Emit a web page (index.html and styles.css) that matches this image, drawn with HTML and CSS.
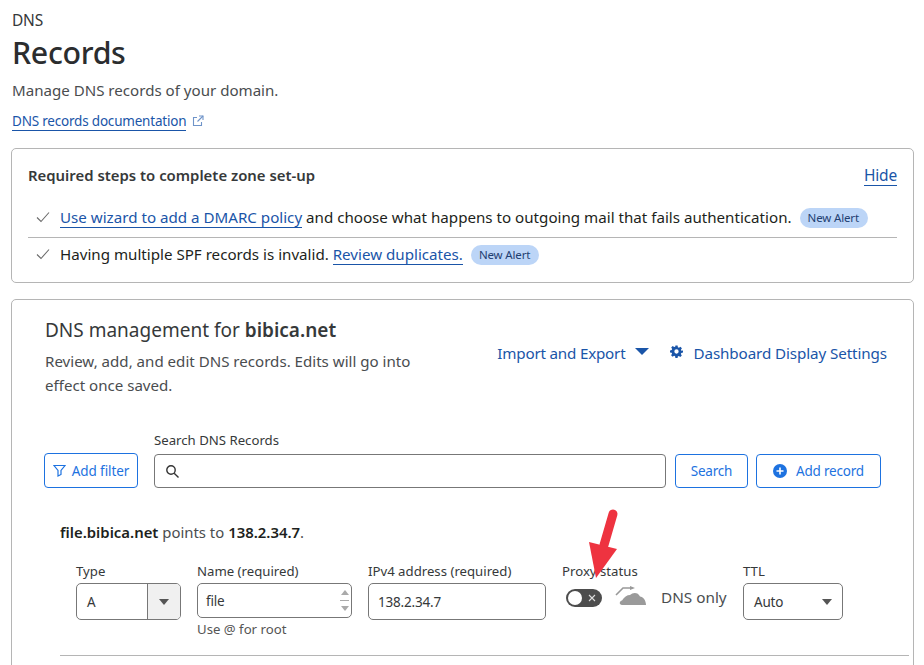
FILE: index.html
```html
<!DOCTYPE html>
<html lang="en">
<head>
    <meta charset="UTF-8">
    <meta name="viewport" content="width=device-width, initial-scale=1.0">
    <title>DNS Records</title>
    <link rel="stylesheet" href="styles.css">
</head>
<body>
<div class="page">
    <header class="page-head">
        <div class="crumb">DNS</div>
        <h1>Records</h1>
        <p class="lead">Manage DNS records of your domain.</p>
        <a class="doc-link"><span class="link">DNS records documentation</span>
            <svg class="ext-icon" width="12" height="12" viewBox="0 0 12 12" fill="none" stroke="#6f94c9" stroke-width="1.1"><path d="M5 2.500H1.500v8h8V7"/><path d="M7 1h4v4"/><path d="M11 1 5.500 6.500"/></svg>
        </a>
    </header>

    <section class="card steps">
        <div class="steps-head">
            <h2>Required steps to complete zone set-up</h2>
            <a class="link">Hide</a>
        </div>
        <ul class="steps-list">
            <li>
                <svg class="check" width="14" height="12" viewBox="0 0 14 12" fill="none" stroke="#6b6b6b" stroke-width="1.1"><path d="M1 6.500 5 10.500 13 1.500"/></svg>
                <span><a class="link">Use wizard to add a DMARC policy</a> and choose what happens to outgoing mail that fails authentication.</span>
                <span class="badge">New Alert</span>
            </li>
            <li>
                <svg class="check" width="14" height="12" viewBox="0 0 14 12" fill="none" stroke="#6b6b6b" stroke-width="1.1"><path d="M1 6.500 5 10.500 13 1.500"/></svg>
                <span>Having multiple SPF records is invalid. <a class="link">Review duplicates.</a></span>
                <span class="badge">New Alert</span>
            </li>
        </ul>
    </section>

    <section class="card dns">
        <div class="dns-top">
            <div class="dns-intro">
                <h2>DNS management for <b>bibica.net</b></h2>
                <p>Review, add, and edit DNS records. Edits will go into effect once saved.</p>
            </div>
            <div class="dns-actions">
                <a class="action">Import and Export<span class="caret"></span></a>
                <a class="action action-settings">
                    <svg class="gear" width="13" height="13" viewBox="0 0 24 24" fill="#1a55a8"><path fill-rule="evenodd" d="M10 1h4l.6 3.200 1.900.8 2.700-1.800 2.800 2.800-1.800 2.700.8 1.900L24 10v4l-3.200.6-.8 1.900 1.800 2.700-2.800 2.800-2.700-1.800-1.900.8L14 24h-4l-.6-3.200-1.900-.8-2.700 1.800-2.800-2.800 1.800-2.700-.8-1.900L0 14v-4l3.200-.6.8-1.900-1.800-2.700L5 2l2.700 1.800 1.900-.8zM12 8a4 4 0 1 0 0 8 4 4 0 0 0 0-8z"/></svg>
                    Dashboard Display Settings
                </a>
            </div>
        </div>

        <div class="search-row">
            <button class="btn btn-filter">
                <svg width="13" height="13" viewBox="0 0 13 13" fill="none" stroke="#1d72e0" stroke-width="1.2"><path d="M1 1.500h11L8 6.500V10.500L5 12V6.500z"/></svg>
                Add filter
            </button>
            <div class="search-field">
                <label>Search DNS Records</label>
                <div class="search-input">
                    <svg width="15" height="15" viewBox="0 0 15 15" fill="none" stroke="#333" stroke-width="1.4"><circle cx="6" cy="6" r="4.200"/><path d="m9.200 9.200 4.300 4.300"/></svg>
                </div>
            </div>
            <button class="btn btn-search">Search</button>
            <button class="btn btn-add">
                <svg width="14" height="14" viewBox="0 0 14 14"><circle cx="7" cy="7" r="7" fill="#1d72e0"/><path d="M7 3.500v7M3.500 7h7" stroke="#fff" stroke-width="1.6"/></svg>
                Add record
            </button>
        </div>

        <div class="record">
            <p class="record-note"><b>file.bibica.net</b> points to <b>138.2.34.7</b>.</p>
            <div class="record-form">
                <div class="field field-type">
                    <label>Type</label>
                    <div class="box type-box">
                        <span>A</span>
                        <span class="type-arrow"><i class="tri"></i></span>
                    </div>
                </div>
                <div class="field field-name">
                    <label>Name (required)</label>
                    <div class="box name-box">
                        <span>file</span>
                        <span class="stepper"><i class="up"></i><i class="bar"></i><i class="tri tri-small"></i></span>
                    </div>
                    <small>Use @ for root</small>
                </div>
                <div class="field field-ip">
                    <label>IPv4 address (required)</label>
                    <div class="box">138.2.34.7</div>
                </div>
                <div class="field field-proxy">
                    <label>Proxy status</label>
                    <div class="proxy-row">
                        <span class="toggle"><i class="knob"></i><svg width="8" height="8" viewBox="0 0 8 8" stroke="#ddd" stroke-width="1.1"><path d="m1 1 6 6M7 1 1 7"/></svg></span>
                        <svg class="cloud" width="32" height="20" viewBox="0 0 32 20"><path d="M1 9 8 2h7" fill="none" stroke="#999" stroke-width="1.6"/><path d="M15 0 20 2l-5 2z" fill="#999"/><path d="M7 19c-3 0-3-4 0-4.500C9 11 12 9 15 9c3-3 8-3 10 1.500 3 0 6 4 6 8.500z" fill="#9a9a9a"/></svg>
                        <span class="proxy-text">DNS only</span>
                    </div>
                </div>
                <div class="field field-ttl">
                    <label>TTL</label>
                    <div class="box ttl-box"><span>Auto</span><i class="tri"></i></div>
                </div>
            </div>
            <hr class="record-line">
        </div>
    </section>

    <svg class="arrow" width="40" height="76" viewBox="0 0 40 76"><path d="M26 7 17 38" stroke="#ee3340" stroke-width="9" stroke-linecap="round" fill="none"/><path d="M2 35 30 42 9 71z" fill="#ee3340"/></svg>
</div>
</body>
</html>
```

FILE: styles.css
```css
html, body {
    margin: 0;
    padding: 0;
    background-color: #fff;
}
body {
    font-family: "Noto Sans", "Open Sans", sans-serif;
    color: #36393a;
    font-size: 14px;
}
.page {
    position: relative;
    height: 665px;
    overflow: hidden;
    padding: 0 10px 0 11px;
    box-sizing: border-box;
}
.link {
    color: #1a55a8;
    border-bottom: 1px solid #1a55a8;
    cursor: pointer;
}

/* page title */
.page-head {
    padding: 11px 0 0 1px;
}
.crumb {
    font-size: 15.500px;
    line-height: 19px;
    letter-spacing: -0.2px;
}
h1 {
    margin: 3px 0 0;
    font-size: 30.300px;
    line-height: 40px;
    font-weight: 500;
    letter-spacing: -0.3px;
    color: #2b2d2f;
}
.lead {
    margin: 7px 0 0;
    font-size: 15.100px;
    line-height: 20px;
    color: #4a4d4f;
}
.doc-link {
    display: flex;
    align-items: center;
    gap: 6px;
    margin-top: 12px;
    font-size: 13.500px;
    line-height: 18px;
    letter-spacing: -0.2px;
}
.ext-icon {
    margin-bottom: 2px;
}

.card {
    border: 1px solid #b5b5b5;
    border-radius: 5px;
    box-sizing: border-box;
}

/* required steps card */
.steps {
    margin-top: 17px;
    height: 135px;
    padding: 16px 16px 0;
}
.steps-head {
    display: flex;
    justify-content: space-between;
    align-items: center;
    height: 21px;
}
.steps-head h2 {
    margin: 0 0 2px;
    font-size: 14.900px;
    font-weight: 600;
    color: #36393a;
}
.steps-head .link {
    font-size: 15.500px;
    line-height: 20px;
    letter-spacing: -0.2px;
}
.steps-list {
    list-style: none;
    margin: 13px 0 0;
    padding: 0;
}
.steps-list li {
    display: flex;
    align-items: center;
    height: 31px;
    padding-left: 8px;
    font-size: 15.150px;
    color: #1d1f20;
}
.steps-list li:first-child {
    height: 36px;
    padding-bottom: 2px;
    border-bottom: 1px solid #b5b5b5;
}
.check {
    margin-right: 10px;
    flex: none;
}
.badge {
    margin: 2px 0 0 8px;
    padding: 0 9px 0 8px;
    height: 20px;
    line-height: 20px;
    border-radius: 10px;
    background-color: #bcd5f7;
    color: #1f3f72;
    font-size: 11.500px;
    letter-spacing: -0.15px;
    white-space: nowrap;
}

/* dns card */
.dns {
    margin-top: 16px;
    height: 420px;
    padding: 16px 26px 0 32px;
}
.dns-top {
    display: flex;
    justify-content: space-between;
}
.dns-intro {
    width: 385px;
    padding-left: 1px;
}
.dns-intro h2 {
    margin: 0;
    font-size: 19px;
    line-height: 28px;
    font-weight: 400;
}
.dns-intro b {
    font-weight: 600;
}
.dns-intro p {
    margin: 5px 0 0;
    font-size: 15.100px;
    line-height: 24px;
    color: #4a4d4f;
}
.dns-actions {
    display: flex;
    gap: 21px;
    padding-top: 27px;
}
.action {
    display: flex;
    align-items: center;
    height: 20px;
    font-size: 15.200px;
    letter-spacing: -0.2px;
    color: #1a55a8;
}
.action-settings {
    letter-spacing: -0.1px;
}
.caret {
    width: 0;
    height: 0;
    margin-left: 10px;
    margin-bottom: 3px;
    border-left: 7px solid transparent;
    border-right: 7px solid transparent;
    border-top: 7px solid #1a55a8;
}
.gear {
    margin-right: 10px;
    margin-bottom: 3px;
}

.search-row {
    display: flex;
    align-items: flex-end;
    margin-top: 34px;
}
.btn {
    display: flex;
    align-items: center;
    justify-content: center;
    box-sizing: border-box;
    height: 34px;
    padding: 0;
    border: 1px solid #1d72e0;
    border-radius: 4px;
    background-color: #fff;
    color: #1d72e0;
    font-family: inherit;
    font-size: 13.500px;
    letter-spacing: -0.2px;
}
.btn-filter {
    width: 94px;
    height: 35px;
    margin-right: 16px;
    gap: 6px;
    letter-spacing: -0.1px;
}
.search-field {
    width: 512px;
    margin-right: 9px;
}
.search-field label {
    display: block;
    font-size: 13.200px;
    line-height: 18px;
    margin-bottom: 5px;
}
.search-input {
    display: flex;
    align-items: center;
    box-sizing: border-box;
    height: 34px;
    padding-left: 10px;
    border: 1px solid #777;
    border-radius: 4px;
}
.btn-search {
    width: 73px;
    margin-right: 8px;
}
.btn-add {
    width: 125px;
    gap: 9px;
}

/* record being edited */
.record {
    padding-left: 16px;
}
.record-note {
    margin: 34px 0 0;
    font-size: 14.900px;
    line-height: 20px;
    color: #4a4d4f;
}
.record-note b {
    font-weight: 600;
    color: #1d1f20;
}
.record-form {
    display: flex;
    margin-top: 20px;
    padding-left: 16px;
    height: 93px;
}
.field label {
    display: block;
    font-size: 13.200px;
    line-height: 18px;
    margin-bottom: 3px;
}
.field small {
    display: block;
    margin-top: 2px;
    font-size: 13.200px;
    line-height: 18px;
    color: #555;
}
.box {
    display: flex;
    align-items: center;
    box-sizing: border-box;
    height: 37px;
    padding-left: 11px;
    border: 1px solid #777;
    border-radius: 5px;
    font-size: 13.500px;
    letter-spacing: -0.2px;
}
.field-type {
    width: 105px;
    margin-right: 16px;
}
.type-box {
    justify-content: space-between;
    padding-left: 10px;
    overflow: hidden;
}
.type-arrow {
    display: flex;
    align-items: center;
    justify-content: center;
    width: 32px;
    height: 100%;
    border-left: 1px solid #777;
    background-color: #f0f0f0;
}
.tri {
    display: block;
    width: 0;
    height: 0;
    border-left: 5px solid transparent;
    border-right: 5px solid transparent;
    border-top: 6px solid #555;
}
.field-name {
    width: 155px;
    margin-right: 16px;
}
.name-box {
    height: 35px;
    padding-left: 8px;
    padding-right: 2px;
    justify-content: space-between;
}
.stepper {
    display: flex;
    flex-direction: column;
    align-items: center;
    gap: 5px;
}
.stepper .up {
    width: 0;
    height: 0;
    border-left: 4px solid transparent;
    border-right: 4px solid transparent;
    border-bottom: 5px solid #aaa;
}
.stepper .bar {
    width: 9px;
    height: 1px;
    background-color: #aaa;
}
.tri-small {
    border-left-width: 4px;
    border-right-width: 4px;
    border-top: 5px solid #aaa;
}
.field-ip {
    width: 178px;
    margin-right: 16px;
}
.field-ip .box {
    padding-left: 9px;
}
.field-proxy {
    width: 181px;
}
.proxy-row {
    display: flex;
    align-items: center;
    padding-left: 4px;
    height: 30px;
}
.toggle {
    display: flex;
    align-items: center;
    justify-content: space-between;
    box-sizing: border-box;
    width: 36px;
    height: 18px;
    margin-right: 13px;
    padding: 0 6px 0 2px;
    border-radius: 9px;
    background-color: #4d4d4d;
}
.knob {
    width: 14px;
    height: 14px;
    border-radius: 50%;
    background-color: #fff;
}
.cloud {
    margin-right: 14px;
    margin-bottom: 4px;
}
.proxy-text {
    margin-bottom: 2px;
    font-size: 15.300px;
    color: #4a4d4f;
}
.field-ttl {
    width: 100px;
}
.ttl-box {
    justify-content: space-between;
    padding: 0 10px 0 10px;
}
.record-line {
    margin: 0 -22px 0 0;
    border: 0;
    border-top: 1px solid #b5b5b5;
}

/* red arrow drawn on top of the screenshot */
.arrow {
    position: absolute;
    left: 587px;
    top: 507px;
}
```
